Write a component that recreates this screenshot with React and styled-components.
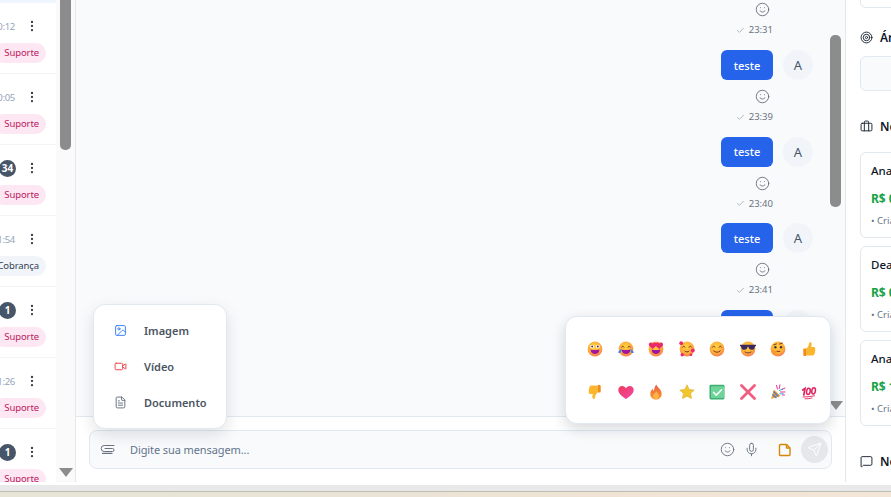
import React from "react";
import styled, { createGlobalStyle } from "styled-components";
import { Smile, Mic, Send, Check, Target, Briefcase, MessageSquare, Image, Video, FileText, MoreVertical } from "lucide-react";

const GlobalStyle = createGlobalStyle`
  html, body {
    margin: 0;
    padding: 0;
    background: #fff;
    overflow: hidden;
  }
  * { box-sizing: border-box; }
  #root {
    font-family: "Noto Sans", "Open Sans", sans-serif;
  }
`;

const Page = styled.div`
  position: relative;
  width: 891px;
  height: 497px;
  display: flex;
  flex-direction: column;
  overflow: hidden;
`;

const Columns = styled.div`
  display: flex;
  height: 482px;
  margin-bottom: 3px;
`;

const BrowserEdge = styled.div`
  height: 6px;
  background: #e9e9ea;
`;

const DesktopStrip = styled.div`
  flex: 1;
  border-top: 1px solid #bdbdb6;
  background: linear-gradient(90deg, #e6e5d6 0%, #e9e4d6 40%, #f0e4d4 70%, #f3e6d8 100%);
`;

/* conversation list */
const ListColumn = styled.aside`
  position: relative;
  width: 76px;
  flex: none;
  display: flex;
  background: #fafafa;
  border-right: 1px solid #e5e7eb;
`;

const ListScroll = styled.div`
  width: 56px;
  background: #fff;
  overflow: hidden;
`;

const ActiveRowEnd = styled.div`
  height: 3px;
  background: #eff6ff;
`;

const ConversationRow = styled.div`
  height: 71px;
  padding-top: 15px;
  border-bottom: 1px solid #f3f4f6;
  display: flex;
  flex-direction: column;
  align-items: flex-end;
`;

const RowTop = styled.div`
  height: 16px;
  display: flex;
  align-items: center;
  justify-content: flex-end;
  margin-right: 24px;
`;

const RowTime = styled.span`
  font-size: 9.5px;
  letter-spacing: -0.3px;
  color: #94a3b8;
  margin-right: 10px;
  white-space: nowrap;
`;

const Badge = styled.span`
  width: 17px;
  height: 17px;
  border-radius: 50%;
  margin-right: 9px;
  background: #475569;
  color: #fff;
  font-size: 10px;
  font-weight: 700;
  display: flex;
  align-items: center;
  justify-content: center;
`;

const DotsIcon = styled(MoreVertical)`
  width: 14px;
  height: 14px;
  margin-right: -7px;
  color: #374151;
`;

const Tag = styled.span`
  margin-top: 9px;
  margin-right: 10px;
  height: 20px;
  padding: 0 7px 0 10px;
  border-radius: 10px;
  font-size: 9.5px;
  letter-spacing: -0.1px;
  line-height: 20px;
  white-space: nowrap;
  background: ${(p) => (p.$billing ? "#f1f5f9" : "#fce7f3")};
  color: ${(p) => (p.$billing ? "#334155" : "#be185d")};
`;

const ScrollThumb = styled.div`
  position: absolute;
  left: ${(p) => p.$left}px;
  top: ${(p) => p.$top}px;
  width: 11px;
  height: ${(p) => p.$height}px;
  border-radius: 5px;
  background: #8c8c8c;
`;

const ScrollArrow = styled.div`
  position: absolute;
  left: ${(p) => p.$left}px;
  top: ${(p) => p.$top}px;
  width: 0;
  height: 0;
  border-left: 7px solid transparent;
  border-right: 7px solid transparent;
  border-top: 9px solid #8c8c8c;
`;

/* chat */
const ChatColumn = styled.main`
  position: relative;
  width: 770px;
  flex: none;
  display: flex;
  flex-direction: column;
  background: #fff;
  border-right: 1px solid #e5e7eb;
`;

const MessageArea = styled.div`
  flex: 1;
  min-height: 0;
  background: #f8fafc;
  border-bottom: 1px solid #e2e8f0;
  overflow: hidden;
  padding: 0 32px 0 0;
`;

const MessageList = styled.div`
  margin-top: -36.67px;
  display: flex;
  flex-direction: column;
  align-items: flex-end;
`;

const MessageBlock = styled.div`
  height: 86.67px;
  flex: none;
  display: flex;
  align-items: flex-start;
  gap: 10px;
`;

const MessageBody = styled.div`
  display: flex;
  flex-direction: column;
  align-items: flex-end;
`;

const Bubble = styled.div`
  width: 52px;
  height: 30px;
  border-radius: 6px;
  background: #2563eb;
  color: #fff;
  font-size: 11px;
  font-weight: 500;
  display: flex;
  align-items: center;
  justify-content: center;
`;

const ReactIcon = styled(Smile)`
  width: 15px;
  height: 15px;
  margin: 9px 3px 0 0;
  color: #6b7280;
`;

const Meta = styled.div`
  display: flex;
  align-items: center;
  gap: 4px;
  margin-top: 6px;
  font-size: 9.5px;
  line-height: 14px;
  color: #6b7280;
`;

const Avatar = styled.div`
  width: 30px;
  height: 30px;
  border-radius: 50%;
  background: #f1f5f9;
  color: #475569;
  font-size: 13px;
  display: flex;
  align-items: center;
  justify-content: center;
`;

const Composer = styled.div`
  height: 65px;
  flex: none;
  padding: 13px 13px 0;
`;

const InputBar = styled.div`
  height: 39px;
  border: 1px solid #e2e8f0;
  border-radius: 8px;
  background: #f8fafc;
  display: flex;
  align-items: center;
  padding: 0 3px 0 10px;
`;

const Placeholder = styled.span`
  flex: 1;
  margin-left: 16px;
  font-size: 11px;
  letter-spacing: -0.1px;
  color: #64748b;
`;

const BarIcon = styled.span`
  display: flex;
  color: ${(p) => p.$color || "#6b7280"};
  margin-right: ${(p) => p.$gap}px;
`;

const SendButton = styled.div`
  width: 27px;
  height: 27px;
  border-radius: 50%;
  background: #e5e7eb;
  color: #fff;
  display: flex;
  align-items: center;
  justify-content: center;
`;

const Popover = styled.div`
  position: absolute;
  background: #fff;
  border: 1px solid #e2e8f0;
  border-radius: 12px;
  box-shadow: 0 6px 16px rgba(15, 23, 42, 0.12);
`;

const AttachMenu = styled(Popover)`
  left: 17px;
  top: 304px;
  width: 134px;
  height: 125px;
  padding: 7px 0;
  display: flex;
  flex-direction: column;
`;

const AttachItem = styled.div`
  height: 37px;
  display: flex;
  align-items: center;
  gap: 17px;
  padding-left: 20px;
  font-size: 11px;
  font-weight: 600;
  color: #4b5563;
  svg { color: ${(p) => p.$color}; }
`;

const EmojiPanel = styled(Popover)`
  left: 489px;
  top: 316px;
  width: 266px;
  height: 108px;
  padding: 10px 11px 0 14px;
  display: grid;
  grid-template-columns: repeat(8, 30.5px);
  grid-auto-rows: 43px;
  box-shadow: 0 5px 14px rgba(15, 23, 42, 0.16);
`;

const EmojiCell = styled.div`
  display: flex;
  align-items: center;
  justify-content: center;
`;

/* details panel */
const DetailsColumn = styled.aside`
  flex: 1;
  min-width: 0;
  background: #fff;
  padding-left: 14px;
  overflow: hidden;
  white-space: nowrap;
`;

const ClippedCard = styled.div`
  margin-top: -10px;
  height: 18px;
  width: 80px;
  border: 1px solid #e2e8f0;
  border-radius: 6px;
`;

const SectionTitle = styled.div`
  display: flex;
  align-items: center;
  gap: 7px;
  height: 20px;
  margin-top: ${(p) => p.$top}px;
  font-size: 12px;
  font-weight: 600;
  color: #0f172a;
  svg { flex: none; color: #1f2937; }
`;

const AreaBox = styled.div`
  width: 80px;
  height: 35px;
  margin-top: 9px;
  border: 1px solid #e2e8f0;
  border-radius: 6px;
  background: #f8fafc;
`;

const DealCard = styled.div`
  width: 80px;
  height: 86px;
  margin-top: ${(p) => p.$top}px;
  padding: 10px 10px 0;
  border: 1px solid #e2e8f0;
  border-radius: 6px;
  background: #fff;
`;

const DealName = styled.div`
  font-size: 11.5px;
  font-weight: 500;
  line-height: 16px;
  color: #0f172a;
`;

const DealValue = styled.div`
  margin-top: 12px;
  font-size: 12px;
  font-weight: 700;
  line-height: 16px;
  color: #16a34a;
`;

const DealMeta = styled.div`
  margin-top: 7px;
  font-size: 9.5px;
  line-height: 14px;
  color: #64748b;
`;

const Emoji = ({ kind }) => {
  const id = `g-${kind}`;
  const face = (
    <>
      <defs>
        <radialGradient id={id} cx="0.45" cy="0.35" r="0.75">
          <stop offset="0" stopColor="#ffd23f" />
          <stop offset="0.6" stopColor="#fdaa3a" />
          <stop offset="1" stopColor="#f2675f" />
        </radialGradient>
      </defs>
      <circle cx="8" cy="8" r="7.4" fill={`url(#${id})`} />
    </>
  );
  const mouth = <path d="M3.6 8.4c2.9.7 5.9.7 8.8 0 0 2.9-2 4.7-4.4 4.7s-4.400-1.800-4.400-4.700z" fill="#a3159d" />;
  const arcs = <path d="M3.4 6.2c.6-1.300 2-1.300 2.600 0M10 6.200c.6-1.300 2-1.300 2.600 0" fill="none" stroke="#7a3b2e" strokeWidth="1" strokeLinecap="round" />;
  let art = null;
  if (kind === "grin") {
    art = (
      <>
        {face}
        <circle cx="5.2" cy="5.6" r="1.9" fill="#fff" />
        <circle cx="10.8" cy="5.6" r="1.9" fill="#fff" />
        <circle cx="5.2" cy="5.6" r="1" fill="#4a3140" />
        <circle cx="10.8" cy="5.6" r="1" fill="#4a3140" />
        {mouth}
      </>
    );
  } else if (kind === "joy") {
    art = (
      <>
        {face}
        {arcs}
        {mouth}
        <path d="M0 11.4c1-1.600 2.300-3 3.400-3.400.3 1.600-.4 3.300-1.400 4.200zM16 11.400c-1-1.600-2.300-3-3.400-3.400-.3 1.600.4 3.300 1.400 4.200z" fill="#3f83e8" />
      </>
    );
  } else if (kind === "hearts") {
    art = (
      <>
        {face}
        {mouth}
        <path d="M4.800 8 1.400 5C.2 3.800.9 1.600 2.700 1.500c1-.1 1.700.5 2.100 1.200.4-.7 1.100-1.300 2.100-1.200C8.700 1.600 9.300 3.800 8 5z" fill="#e9286f" />
        <path d="M11.200 8 7.800 5c-1.200-1.200-.5-3.400 1.300-3.500 1-.1 1.700.5 2.100 1.200.4-.7 1.100-1.300 2.100-1.200 1.800.1 2.400 2.300 1.100 3.500z" fill="#e9286f" />
      </>
    );
  } else if (kind === "love") {
    art = (
      <>
        {face}
        {arcs}
        <path d="M6 10.200c1.200 1 2.800 1 4 0" fill="none" stroke="#7a3b2e" strokeWidth="1" strokeLinecap="round" />
        <circle cx="2.200" cy="2.200" r="1.900" fill="#e9286f" />
        <circle cx="13.800" cy="9.400" r="1.900" fill="#e9286f" />
        <circle cx="3.200" cy="13.800" r="1.700" fill="#e9286f" />
        <circle cx="12" cy="13.800" r="1.300" fill="#e9286f" />
      </>
    );
  } else if (kind === "smile") {
    art = (
      <>
        {face}
        {arcs}
        <path d="M4.800 10c1.800 1.700 4.600 1.700 6.400 0" fill="none" stroke="#7a3b2e" strokeWidth="1" strokeLinecap="round" />
      </>
    );
  } else if (kind === "cool") {
    art = (
      <>
        {face}
        <path d="M0 3.800h16v1.300l-1 .3c-.2 2.300-1.600 3.400-3.300 3.400-1.800 0-3-1.200-3.300-3h-.8c-.3 1.800-1.500 3-3.300 3-1.700 0-3.100-1.100-3.300-3.400l-1-.3z" fill="#3a2a5e" />
        <path d="M5 11c1.800 1.300 4.200 1.300 6 0" fill="none" stroke="#7a3b2e" strokeWidth="1" strokeLinecap="round" />
      </>
    );
  } else if (kind === "think") {
    art = (
      <>
        {face}
        <circle cx="5.400" cy="6.200" r="1.200" fill="#4a3140" />
        <circle cx="11" cy="6.200" r="1.200" fill="#4a3140" />
        <path d="M3.800 3.800 6.400 3M9.600 3l2.800-.9" stroke="#7a3b2e" strokeWidth="1" strokeLinecap="round" />
        <path d="M6.400 10.400h3.400" stroke="#7a3b2e" strokeWidth="1" strokeLinecap="round" />
        <path d="M1.800 12c-.8-1.400-.3-3 .6-3.400.7-.3 1.200.7 1.500 1.300l2-.6c1-.3 1.300 1.600.6 2.400-.9 1.700-3.600 2.300-4.700.3z" fill="#f79a2a" />
      </>
    );
  } else if (kind === "up" || kind === "down") {
    art = (
      <g transform={kind === "down" ? "rotate(180 8 8)" : undefined}>
        <rect x="2.300" y="7.500" width="3.300" height="7.500" rx="1" fill="#f08c1a" />
        <path d="M5.200 7.800c1.800-1.400 2.600-3.300 2.900-6 .1-1 2.400-1 2.600 1 .1 1.200-.3 2.300-.6 3.200h2.600c1.600 0 1.900 1.300 1.300 2.200.6.700.5 1.700-.1 2.300.4.800.1 1.700-.5 2.100.2 1-.5 1.900-1.500 1.900H7.400c-1 0-1.500-.4-2.200-.8z" fill="#fbb62e" />
      </g>
    );
  } else if (kind === "heart") {
    art = (
      <>
        <defs>
          <linearGradient id={id} x1="0" y1="0" x2="0.7" y2="1">
            <stop offset="0" stopColor="#f13a5e" />
            <stop offset="1" stopColor="#f0479f" />
          </linearGradient>
        </defs>
        <path d="M8 15C5 13 .3 10 .3 6 .3 3.500 2.200 2 4.300 2 6 2 7.300 3 8 4.300 8.700 3 10 2 11.700 2c2.100 0 4 1.500 4 4 0 4-4.700 7-7.700 9z" fill={`url(#${id})`} />
      </>
    );
  } else if (kind === "fire") {
    art = (
      <>
        <defs>
          <linearGradient id={id} x1="0.5" y1="0" x2="0.5" y2="1">
            <stop offset="0" stopColor="#ea5f46" />
            <stop offset="1" stopColor="#fb9a2c" />
          </linearGradient>
        </defs>
        <path d="M8.400.4c.6 2.700 5.300 4.800 5.300 9.400 0 3.500-2.600 5.800-5.700 5.800s-5.700-2.300-5.700-5.700c0-2.400 1.200-4.100 2.400-5.100.1 1.100.5 1.800 1.100 2.200C6 4.300 7 2 8.400.4z" fill={`url(#${id})`} />
        <path d="M8.400 7.200c.5 1.400 2.600 2.500 2.600 4.800 0 1.800-1.400 3-3 3s-3-1.200-3-2.900c0-2.200 2.600-3 3.400-4.900z" fill="#fdb24a" />
      </>
    );
  } else if (kind === "star") {
    art = <path d="M8 .8l2.200 4.600 5 .7-3.600 3.500.9 5L8 12.200l-4.500 2.400.9-5L.8 6.100l5-.7z" fill="#f0c52e" stroke="#e3ac2a" strokeWidth=".6" strokeLinejoin="round" />;
  } else if (kind === "check") {
    art = (
      <>
        <rect x=".5" y=".8" width="15" height="14.600" rx="1.400" fill="#3dae74" />
        <rect x="2" y="2.300" width="13" height="11.600" rx="1" fill="#6fd49a" />
        <path d="M4.500 8.400l2.800 2.700L12.500 5.800" fill="none" stroke="#f2fff8" strokeWidth="1.500" strokeLinecap="round" strokeLinejoin="round" />
      </>
    );
  } else if (kind === "cross") {
    art = <path d="M1.500 1.500l13 13M14.500 1.500l-13 13" stroke="#f25c7f" strokeWidth="2.800" strokeLinecap="round" />;
  } else if (kind === "party") {
    art = (
      <>
        <path d="M1 15 4 5.500 10.500 12z" fill="#e8a33a" />
        <path d="M2.400 10.500 6.500 14M3.400 7.500l5 5" stroke="#4a72c8" strokeWidth="1.100" />
        <path d="M6.500 1.500l1 3.500M10 .8 9.200 4.500M12 5.500l3-1.500M10.500 8h4.500M12.500 11h2" stroke="#e9338c" strokeWidth="1" strokeLinecap="round" />
        <path d="M9.500 6.500l3.200-1.700M9.800 9.800h3.400" stroke="#38a4e6" strokeWidth="1" strokeLinecap="round" />
      </>
    );
  } else if (kind === "hundred") {
    art = (
      <g fill="none" stroke="#e0245e" strokeLinecap="round">
        <path d="M1.700 6 4 4.500 2.800 11" strokeWidth="1.700" />
        <ellipse cx="7.400" cy="7.400" rx="1.800" ry="3.100" transform="rotate(10 7.400 7.400)" strokeWidth="1.500" />
        <ellipse cx="12.600" cy="6.900" rx="1.800" ry="3.100" transform="rotate(10 12.600 6.900)" strokeWidth="1.500" />
        <path d="M2 13c4 0 8-.4 11.500-1.200M4 14.800c3 0 5-.2 7-.8" strokeWidth=".9" />
      </g>
    );
  }
  return (
    <svg width="16" height="16" viewBox="0 0 16 16">
      {art}
    </svg>
  );
};

const conversations = [
  { time: "10:12", tag: "Suporte" },
  { time: "10:05", tag: "Suporte" },
  { badge: "34", tag: "Suporte" },
  { time: "11:54", tag: "Cobrança", billing: true },
  { badge: "1", tag: "Suporte" },
  { time: "11:26", tag: "Suporte" },
  { badge: "1", tag: "Suporte" },
];

const messages = ["23:31", "23:39", "23:40", "23:41", "23:42"];

const emojis = [
  "grin", "joy", "hearts", "love", "smile", "cool", "think", "up",
  "down", "heart", "fire", "star", "check", "cross", "party", "hundred",
];

const deals = [
  { name: "Ana Souza", value: "R$ 0,00", top: 16 },
  { name: "Deal de teste", value: "R$ 0,00", top: 8 },
  { name: "Ana Lima", value: "R$ 1.000,00", top: 8 },
];

const PaperclipIcon = () => (
  <svg width="15" height="15" viewBox="0 0 15 15" fill="none" stroke="currentColor" strokeWidth="1" strokeLinecap="round">
    <path d="M14 3.500H4.200a3 3 0 0 0 0 6h8.300a1.500 1.500 0 0 0 0-3H5" />
    <path d="M2.500 11.300h9.500" strokeWidth="1.300" />
  </svg>
);

const NoteIcon = () => (
  <svg width="14" height="14" viewBox="0 0 14 14" fill="none" stroke="currentColor" strokeWidth="1.400" strokeLinejoin="round">
    <path d="M2.500 1.500h6l3.500 3.500v6.500a1 1 0 0 1-1 1H2.500a1 1 0 0 1-1-1v-9a1 1 0 0 1 1-1z" />
    <path d="M8.500 1.500V5H12" />
  </svg>
);

export default function App() {
  return (
    <Page>
      <GlobalStyle />
      <Columns>
        <ListColumn>
          <ListScroll>
            <ActiveRowEnd />
            {conversations.map((c, i) => (
              <ConversationRow key={i}>
                <RowTop>
                  {c.badge ? <Badge>{c.badge}</Badge> : <RowTime>{c.time}</RowTime>}
                  <DotsIcon />
                </RowTop>
                <Tag $billing={c.billing}>{c.tag}</Tag>
              </ConversationRow>
            ))}
          </ListScroll>
          <ScrollThumb $left={60} $top={-10} $height={160} />
          <ScrollArrow $left={59} $top={468} />
        </ListColumn>

        <ChatColumn>
          <MessageArea>
            <MessageList>
              {messages.map((time, i) => (
                <MessageBlock key={i}>
                  <MessageBody>
                    <Bubble>teste</Bubble>
                    <ReactIcon strokeWidth={1.5} />
                    <Meta>
                      <Check size={9} color="#9ca3af" />
                      {time}
                    </Meta>
                  </MessageBody>
                  <Avatar>A</Avatar>
                </MessageBlock>
              ))}
            </MessageList>
          </MessageArea>
          <Composer>
            <InputBar>
              <BarIcon $gap={-1}><PaperclipIcon /></BarIcon>
              <Placeholder>Digite sua mensagem...</Placeholder>
              <BarIcon $gap={9}><Smile size={15} strokeWidth={1.5} /></BarIcon>
              <BarIcon $gap={19}><Mic size={15} strokeWidth={1.5} /></BarIcon>
              <BarIcon $gap={9} $color="#d48806"><NoteIcon /></BarIcon>
              <SendButton><Send size={15} strokeWidth={1.5} /></SendButton>
            </InputBar>
          </Composer>
          <ScrollThumb $left={754} $top={35} $height={172} />
          <ScrollArrow $left={753} $top={401} />
          <AttachMenu>
            <AttachItem $color="#3b82f6"><Image size={13} strokeWidth={1.8} />Imagem</AttachItem>
            <AttachItem $color="#ef4444"><Video size={13} strokeWidth={1.8} />Vídeo</AttachItem>
            <AttachItem $color="#6b7280"><FileText size={13} strokeWidth={1.8} />Documento</AttachItem>
          </AttachMenu>
          <EmojiPanel>
            {emojis.map((e) => (
              <EmojiCell key={e}><Emoji kind={e} /></EmojiCell>
            ))}
          </EmojiPanel>
        </ChatColumn>

        <DetailsColumn>
          <ClippedCard />
          <SectionTitle $top={19}><Target size={13} strokeWidth={1.8} />Áreas de interesse</SectionTitle>
          <AreaBox />
          <SectionTitle $top={25}><Briefcase size={13} strokeWidth={1.8} />Negócios</SectionTitle>
          {deals.map((d) => (
            <DealCard key={d.name} $top={d.top}>
              <DealName>{d.name}</DealName>
              <DealValue>{d.value}</DealValue>
              <DealMeta>• Criado em 12/03</DealMeta>
            </DealCard>
          ))}
          <SectionTitle $top={25}><MessageSquare size={13} strokeWidth={1.8} />Notas</SectionTitle>
        </DetailsColumn>
      </Columns>
      <BrowserEdge />
      <DesktopStrip />
    </Page>
  );
}
